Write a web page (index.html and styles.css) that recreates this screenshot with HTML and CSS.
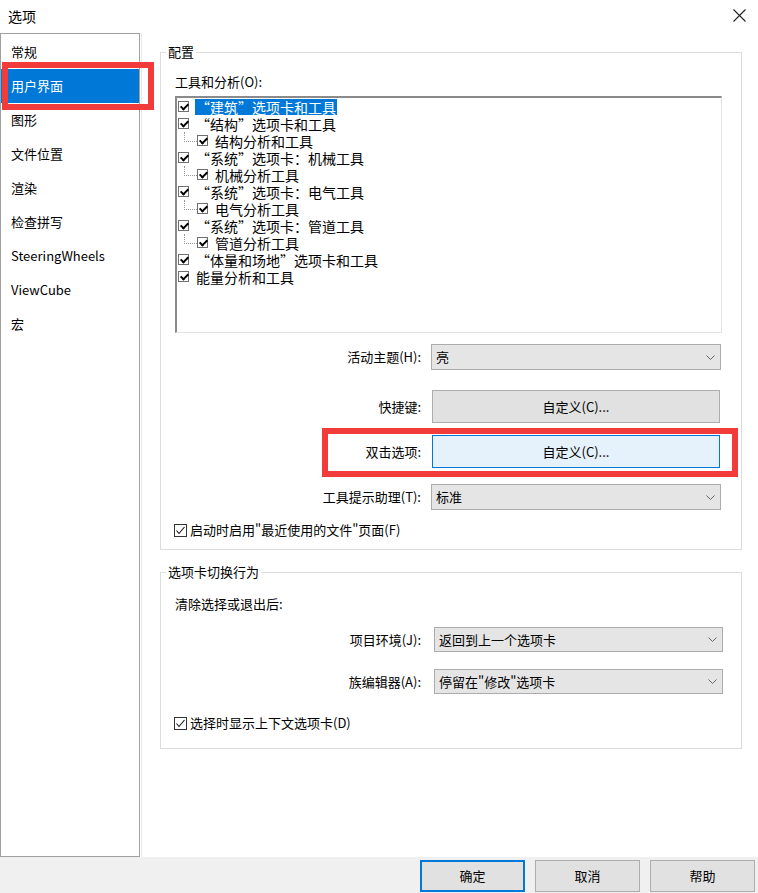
FILE: index.html
```html
<!DOCTYPE html>
<html lang="zh-CN">
<head>
  <meta charset="UTF-8">
  <title>选项</title>
  <link rel="stylesheet" href="styles.css">
</head>
<body>
  <div class="titlebar">
    <span class="title">选项</span>
    <svg class="close" width="13" height="13" viewBox="0 0 13 13"><path d="M0.5 0.5L12.5 12.5M12.5 0.5L0.5 12.5" stroke="#222" stroke-width="1.1" fill="none"/></svg>
  </div>

  <div class="main">
    <!-- левое меню -->
    <ul class="nav">
      <li>常规</li>
      <li class="active">用户界面<span class="mark mark-nav"></span></li>
      <li>图形</li>
      <li>文件位置</li>
      <li>渲染</li>
      <li>检查拼写</li>
      <li>SteeringWheels</li>
      <li>ViewCube</li>
      <li>宏</li>
    </ul>

    <div class="content">
      <fieldset class="group">
        <legend>配置</legend>
        <div class="group-body body-config">
          <div class="field-label">工具和分析(O):</div>
          <div class="tree">
            <div class="node"><span class="cb"></span><span class="text selected">“建筑”选项卡和工具</span></div>
            <div class="node"><span class="cb"></span><span class="text">“结构”选项卡和工具</span></div>
            <div class="node child"><span class="branch"></span><span class="cb"></span><span class="text">结构分析和工具</span></div>
            <div class="node"><span class="cb"></span><span class="text">“系统”选项卡：机械工具</span></div>
            <div class="node child"><span class="branch"></span><span class="cb"></span><span class="text">机械分析工具</span></div>
            <div class="node"><span class="cb"></span><span class="text">“系统”选项卡：电气工具</span></div>
            <div class="node child"><span class="branch"></span><span class="cb"></span><span class="text">电气分析工具</span></div>
            <div class="node"><span class="cb"></span><span class="text">“系统”选项卡：管道工具</span></div>
            <div class="node child"><span class="branch"></span><span class="cb"></span><span class="text">管道分析工具</span></div>
            <div class="node"><span class="cb"></span><span class="text">“体量和场地”选项卡和工具</span></div>
            <div class="node"><span class="cb"></span><span class="text">能量分析和工具</span></div>
          </div>

          <div class="form-row row-theme">
            <label>活动主题(H):</label>
            <div class="select select-short"><span>亮</span><svg class="chev" width="9" height="5" viewBox="0 0 9 5"><polyline points="0.5,0.5 4.5,4.5 8.5,0.5" fill="none" stroke="#666"/></svg></div>
          </div>
          <div class="form-row row-keys">
            <label>快捷键:</label>
            <button class="btn">自定义(C)...</button>
          </div>
          <div class="form-row row-dbl">
            <label>双击选项:</label>
            <button class="btn btn-hot">自定义(C)...</button>
            <span class="mark mark-row"></span>
          </div>
          <div class="form-row row-tip">
            <label>工具提示助理(T):</label>
            <div class="select select-short"><span>标准</span><svg class="chev" width="9" height="5" viewBox="0 0 9 5"><polyline points="0.5,0.5 4.5,4.5 8.5,0.5" fill="none" stroke="#666"/></svg></div>
          </div>
          <div class="check-row row-recent">
            <svg class="check" width="13" height="13" viewBox="0 0 13 13"><rect x="0.5" y="0.5" width="12" height="12" fill="#fff" stroke="#333"/><polyline points="2.5,6.5 5,9.5 10.5,3" fill="none" stroke="#111" stroke-width="1.1"/></svg>
            <span>启动时启用"最近使用的文件"页面(F)</span>
          </div>
        </div>
      </fieldset>

      <fieldset class="group group-tabs">
        <legend>选项卡切换行为</legend>
        <div class="group-body body-tabs">
          <div class="field-label">清除选择或退出后:</div>
          <div class="form-row wide row-env">
            <label>项目环境(J):</label>
            <div class="select"><span>返回到上一个选项卡</span><svg class="chev" width="9" height="5" viewBox="0 0 9 5"><polyline points="0.5,0.5 4.5,4.5 8.5,0.5" fill="none" stroke="#666"/></svg></div>
          </div>
          <div class="form-row wide row-family">
            <label>族编辑器(A):</label>
            <div class="select"><span>停留在"修改"选项卡</span><svg class="chev" width="9" height="5" viewBox="0 0 9 5"><polyline points="0.5,0.5 4.5,4.5 8.5,0.5" fill="none" stroke="#666"/></svg></div>
          </div>
          <div class="check-row row-context">
            <svg class="check" width="13" height="13" viewBox="0 0 13 13"><rect x="0.5" y="0.5" width="12" height="12" fill="#fff" stroke="#333"/><polyline points="2.5,6.5 5,9.5 10.5,3" fill="none" stroke="#111" stroke-width="1.1"/></svg>
            <span>选择时显示上下文选项卡(D)</span>
          </div>
        </div>
      </fieldset>
    </div>
  </div>

  <div class="footer">
    <button class="fbtn fbtn-default">确定</button>
    <button class="fbtn">取消</button>
    <button class="fbtn">帮助</button>
  </div>
</body>
</html>
```

FILE: styles.css
```css
* {
  box-sizing: border-box;
}
html, body {
  margin: 0;
}
body {
  width: 758px;
  height: 893px;
  overflow: hidden;
  background: #fff;
  color: #000;
  font-family: "Noto Sans CJK SC", sans-serif;
  font-size: 13px;
  line-height: 18px;
}
.titlebar {
  height: 33px;
  display: flex;
  align-items: center;
  justify-content: space-between;
  padding: 0 12px 2px 8px;
}
.title {
  font-size: 14px;
}
.main {
  display: flex;
  height: 824px;
}
.nav {
  list-style: none;
  margin: 0;
  padding: 1px 0 0;
  width: 140px;
  flex: none;
  border: 1px solid #a0a0a0;
}
.nav li {
  height: 34px;
  line-height: 34px;
  padding-left: 10px;
  position: relative;
}
.nav li.active {
  background: #0078d7;
  color: #fff;
}
.mark {
  position: absolute;
  border: 6px solid #f23c3c;
}
.mark-nav {
  left: 1px;
  top: -7px;
  width: 152px;
  height: 48px;
}
.content {
  flex: 1;
  margin-left: 1px;
  border-left: 1px solid #e8e8e8;
  padding: 10px 0 0 18px;
}
.group {
  margin: 0;
  padding: 0;
  min-width: 0;
  width: 582px;
  border: 1px solid #dcdcdc;
}
.group legend {
  margin-left: 5px;
  padding: 0 2px;
  line-height: 18px;
}
.group-body {
  padding: 12px 19px 10px 14px;
}
.tree {
  height: 237px;
  margin-top: 5px;
  border-style: solid;
  border-width: 2px 1px 1px 2px;
  border-color: #8a8a8a #e3e3e3 #e3e3e3 #8a8a8a;
  padding-left: 1px;
  font-size: 14px;
  line-height: 17px;
}
.node {
  height: 17px;
  display: flex;
  align-items: center;
}
.cb {
  width: 11px;
  height: 11px;
  flex: none;
  border: 1px solid #6f6f6f;
  position: relative;
}
.cb::after {
  content: '';
  position: absolute;
  left: 3px;
  top: 0;
  width: 3px;
  height: 6px;
  border: solid #000;
  border-width: 0 2px 2px 0;
  transform: rotate(45deg);
}
.node .text {
  margin-left: 6px;
  padding: 0 1px;
  height: 16px;
  line-height: 16px;
}
.node .text.selected {
  background: #0078d7;
  color: #fff;
}
.branch {
  width: 13px;
  height: 17px;
  margin-left: 6px;
  flex: none;
  align-self: flex-start;
  position: relative;
}
.branch::before {
  content: '';
  position: absolute;
  left: 0;
  top: 0;
  width: 12px;
  height: 9px;
  border-left: 1px dotted #999;
  border-bottom: 1px dotted #999;
}
.form-row {
  display: grid;
  grid-template-columns: 246px 290px;
  column-gap: 10px;
  align-items: center;
  position: relative;
}
.form-row.wide {
  grid-template-columns: 246px 289px;
  column-gap: 13px;
}
.form-row label {
  text-align: right;
}
.select {
  height: 26px;
  background: #e5e5e5;
  border: 1px solid #acacac;
  display: flex;
  align-items: center;
  justify-content: space-between;
  padding: 0 5px 0 4px;
}
.form-row.wide .select {
  height: 25px;
}
.btn {
  height: 33px;
  width: 288px;
  margin-left: 1px;
  background: #e1e1e1;
  border: 1px solid #adadad;
  font: inherit;
  color: #000;
  padding: 0;
}
.btn-hot {
  background: #e5f1fb;
  border-color: #0078d7;
}
.mark-row {
  left: 147px;
  top: -7px;
  width: 416px;
  height: 49px;
}
.row-theme { margin-top: 11px; }
.row-keys { margin-top: 20px; }
.row-dbl { margin-top: 12px; }
.row-tip { margin-top: 16px; }
.check-row {
  display: flex;
  align-items: center;
  gap: 3px;
  margin-left: -1px;
}
.row-recent { margin-top: 11px; }
.group-tabs {
  margin-top: 13px;
}
.body-tabs {
  padding: 14px 18px 16px 14px;
}
.row-env { margin-top: 14px; }
.row-family { margin-top: 17px; }
.row-context { margin-top: 20px; }
.footer {
  height: 36px;
  background: #f0f0f0;
  display: flex;
  justify-content: flex-end;
  gap: 10px;
  padding: 3px 3px 0 0;
}
.fbtn {
  width: 105px;
  height: 32px;
  background: #e1e1e1;
  border: 1px solid #adadad;
  font: inherit;
  color: #000;
  padding: 0;
}
.fbtn-default {
  border-color: #0078d7;
  box-shadow: inset 0 0 0 1px #0078d7;
}
```
